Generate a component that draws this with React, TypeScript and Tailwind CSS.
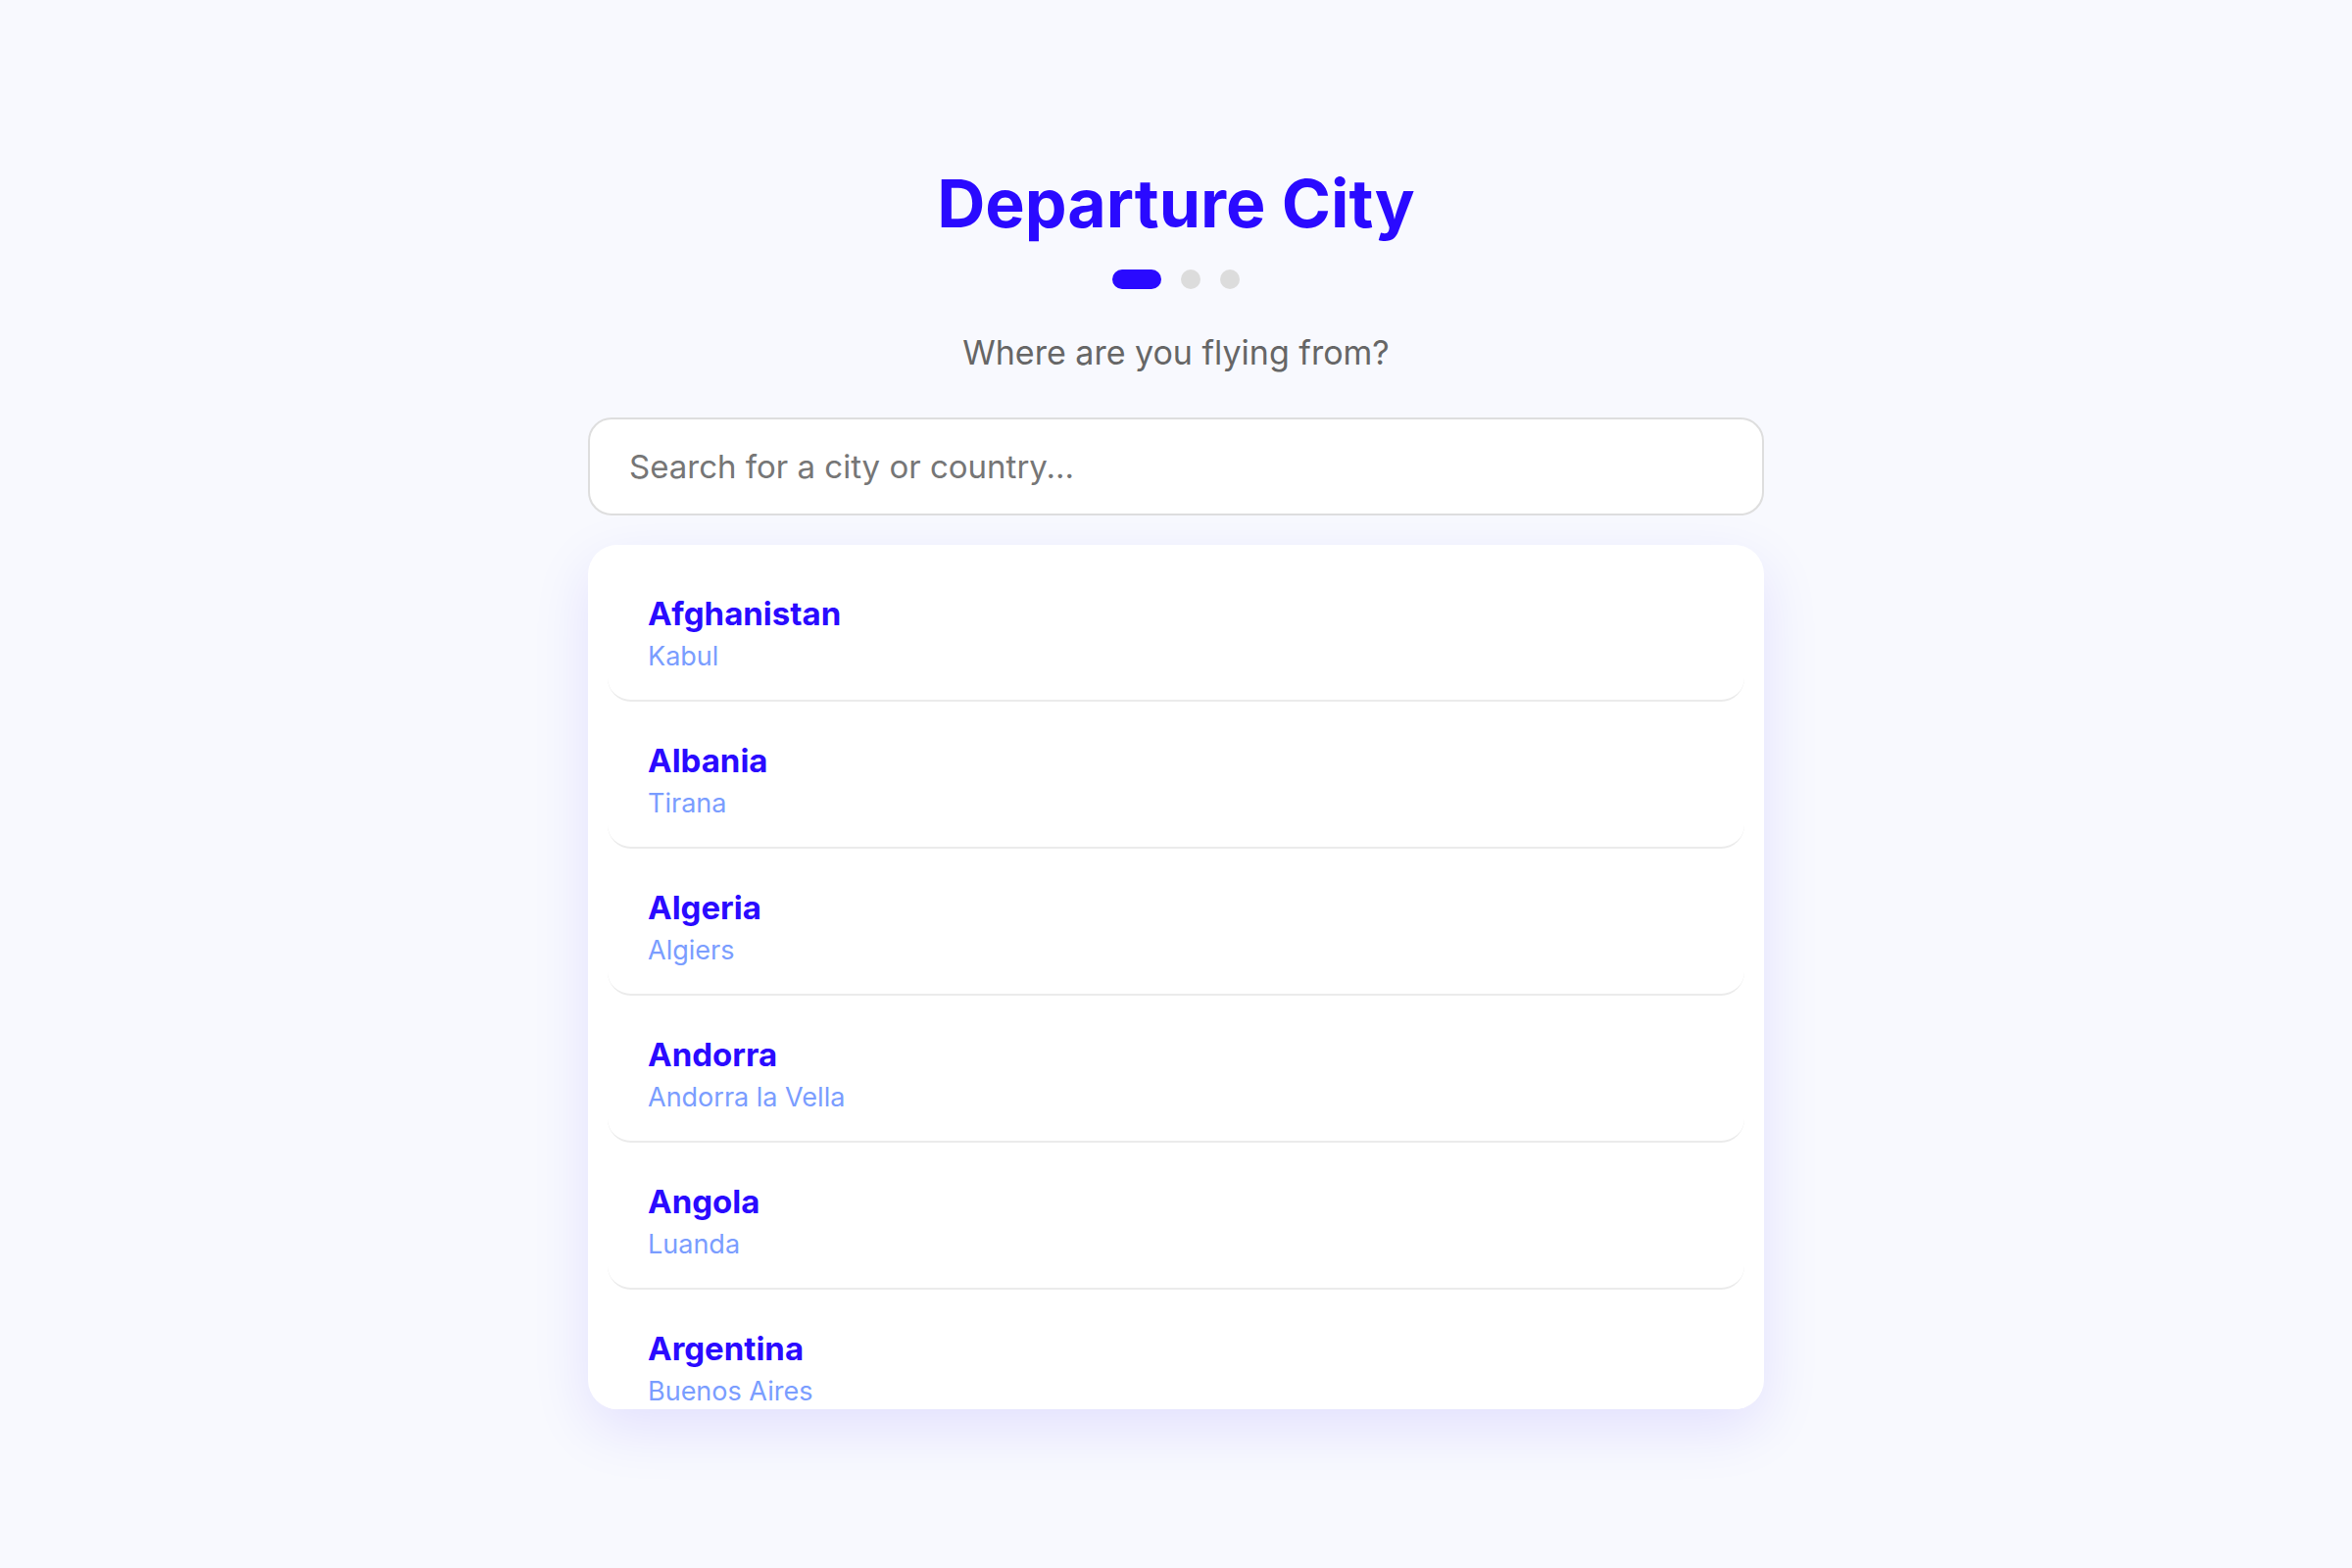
import React, { useState } from "react";

const countries = [
    { name: "Afghanistan", capital: "Kabul" },
    { name: "Albania", capital: "Tirana" },
    { name: "Algeria", capital: "Algiers" },
    { name: "Andorra", capital: "Andorra la Vella" },
    { name: "Angola", capital: "Luanda" },
    { name: "Argentina", capital: "Buenos Aires" },
];

export default function App() {
    const [query, setQuery] = useState("");
    const shown = countries.filter(
        (c) =>
            c.name.toLowerCase().includes(query.toLowerCase()) ||
            c.capital.toLowerCase().includes(query.toLowerCase())
    );

    return (
        <div className="min-h-screen bg-[#f8f9fe] font-['Inter','Open_Sans',sans-serif]">
            <div className="mx-auto flex w-[1200px] flex-col items-center pt-[173px]">
                <h1 className="text-[68px] font-bold leading-none text-[#2a0aff]">Departure City</h1>

                <div className="mt-[34px] flex items-center gap-[20px]">
                    <span className="h-[20px] w-[50px] rounded-full bg-[#2a0aff]" />
                    <span className="h-[20px] w-[20px] rounded-full bg-[#dcdcdc]" />
                    <span className="h-[20px] w-[20px] rounded-full bg-[#dcdcdc]" />
                </div>

                <p className="mt-[48px] text-[34px] leading-none text-[#666666]">Where are you flying from?</p>

                <input
                    type="text"
                    value={query}
                    onChange={(e) => setQuery(e.target.value)}
                    placeholder="Search for a city or country..."
                    className="mt-[49px] h-[100px] w-full rounded-[24px] border-2 border-[#dedede] bg-white px-[40px] text-[33px] text-[#333] placeholder:text-[#767676] focus:outline-none"
                />

                <div className="mt-[30px] h-[882px] w-full overflow-hidden rounded-[30px] bg-white p-[20px] shadow-[0_20px_60px_rgba(42,10,255,0.10)]">
                    <div className="flex flex-col gap-[10px]">
                        {shown.map((c) => (
                            <div
                                key={c.name}
                                className="h-[140px] shrink-0 rounded-[24px] border-b-2 border-[#ebebeb] bg-white px-[41px] pt-[34px]"
                            >
                                <div className="text-[33px] font-bold leading-none text-[#2a0aff]">{c.name}</div>
                                <div className="mt-[13px] text-[27px] leading-none text-[#7a9dff]">{c.capital}</div>
                            </div>
                        ))}
                    </div>
                </div>
            </div>
        </div>
    );
}
